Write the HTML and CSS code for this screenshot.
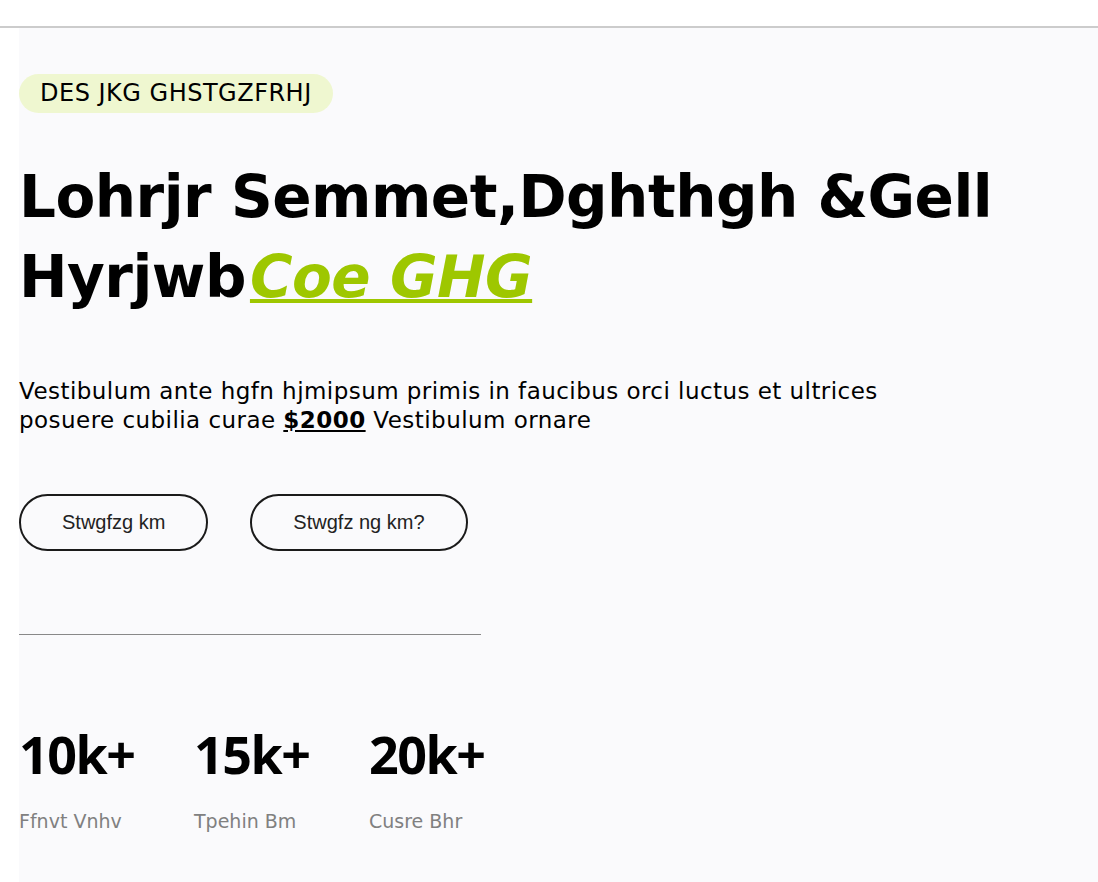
FILE: index.html
```html
<!DOCTYPE html>
<html lang="en">
<head>
<meta charset="utf-8">
<title>Hero</title>
<link rel="stylesheet" href="styles.css">
</head>
<body>
<header class="topbar"></header>
<main class="hero">
  <span class="badge">DES JKG GHSTGZFRHJ</span>
  <h1 class="title">Lohrjr Semmet,Dghthgh &amp;Gell Hyrjwb<a class="accent" href="#">Coe GHG</a></h1>
  <p class="lead">Vestibulum ante hgfn hjmipsum primis in faucibus orci luctus et ultrices posuere cubilia curae <strong class="price">$2000</strong> Vestibulum ornare</p>
  <div class="actions">
    <button class="btn">Stwgfzg km</button>
    <button class="btn">Stwgfz ng km?</button>
  </div>
  <hr class="divider">
  <div class="stats">
    <div class="stat"><div class="num">10k+</div><div class="label">Ffnvt Vnhv</div></div>
    <div class="stat"><div class="num">15k+</div><div class="label">Tpehin Bm</div></div>
    <div class="stat"><div class="num">20k+</div><div class="label">Cusre Bhr</div></div>
  </div>
</main>
</body>
</html>
```
FILE: styles.css
```css
* { box-sizing: border-box; }
html, body { margin: 0; padding: 0; background: #fff; }
body { font-family: "DejaVu Sans", sans-serif; color: #000; }
.topbar { height: 28px; border-bottom: 2px solid #cccccc; }
.hero {
  margin-left: 19px;
  background: #fafafc;
  padding: 46px 0 40px 0;
  min-height: 854px;
}
.badge {
  display: inline-block;
  background: #eff7d0;
  border-radius: 20px;
  padding: 0 21px;
  height: 39px;
  line-height: 39px;
  font-size: 24px;
  letter-spacing: 0.5px;
}
.title {
  margin: 44px 0 0 0;
  font-size: 58px;
  letter-spacing: -0.5px;
  line-height: 80px;
  font-weight: bold;
}
.accent { color: #9ec700; font-style: italic; text-decoration: underline; text-decoration-thickness: 4px; padding-left: 4px; }
.lead {
  margin: 60px 0 0 0;
  font-size: 23px;
  letter-spacing: 0.45px;
  line-height: 29px;
  max-width: 920px;
}
.price { text-decoration: underline; }
.actions { display: flex; gap: 42px; margin-top: 59px; }
.btn {
  font-family: "Liberation Sans", Arial, sans-serif;
  font-size: 20px;
  color: #222;
  background: transparent;
  border: 2px solid #1a1a1a;
  border-radius: 30px;
  height: 57px;
  padding: 0 41px;
}
.divider { margin: 83px 0 0 0; width: 462px; border: 0; border-top: 1px solid #888; }
.stats { display: flex; gap: 0; margin-top: 89px; }
.stat { width: 175px; }
.num { font-family: "Open Sans", sans-serif; font-weight: 700; font-size: 52px; letter-spacing: -1.5px; line-height: 60px; }
.label { color: #808080; font-size: 19px; margin-top: 26px; }
```
